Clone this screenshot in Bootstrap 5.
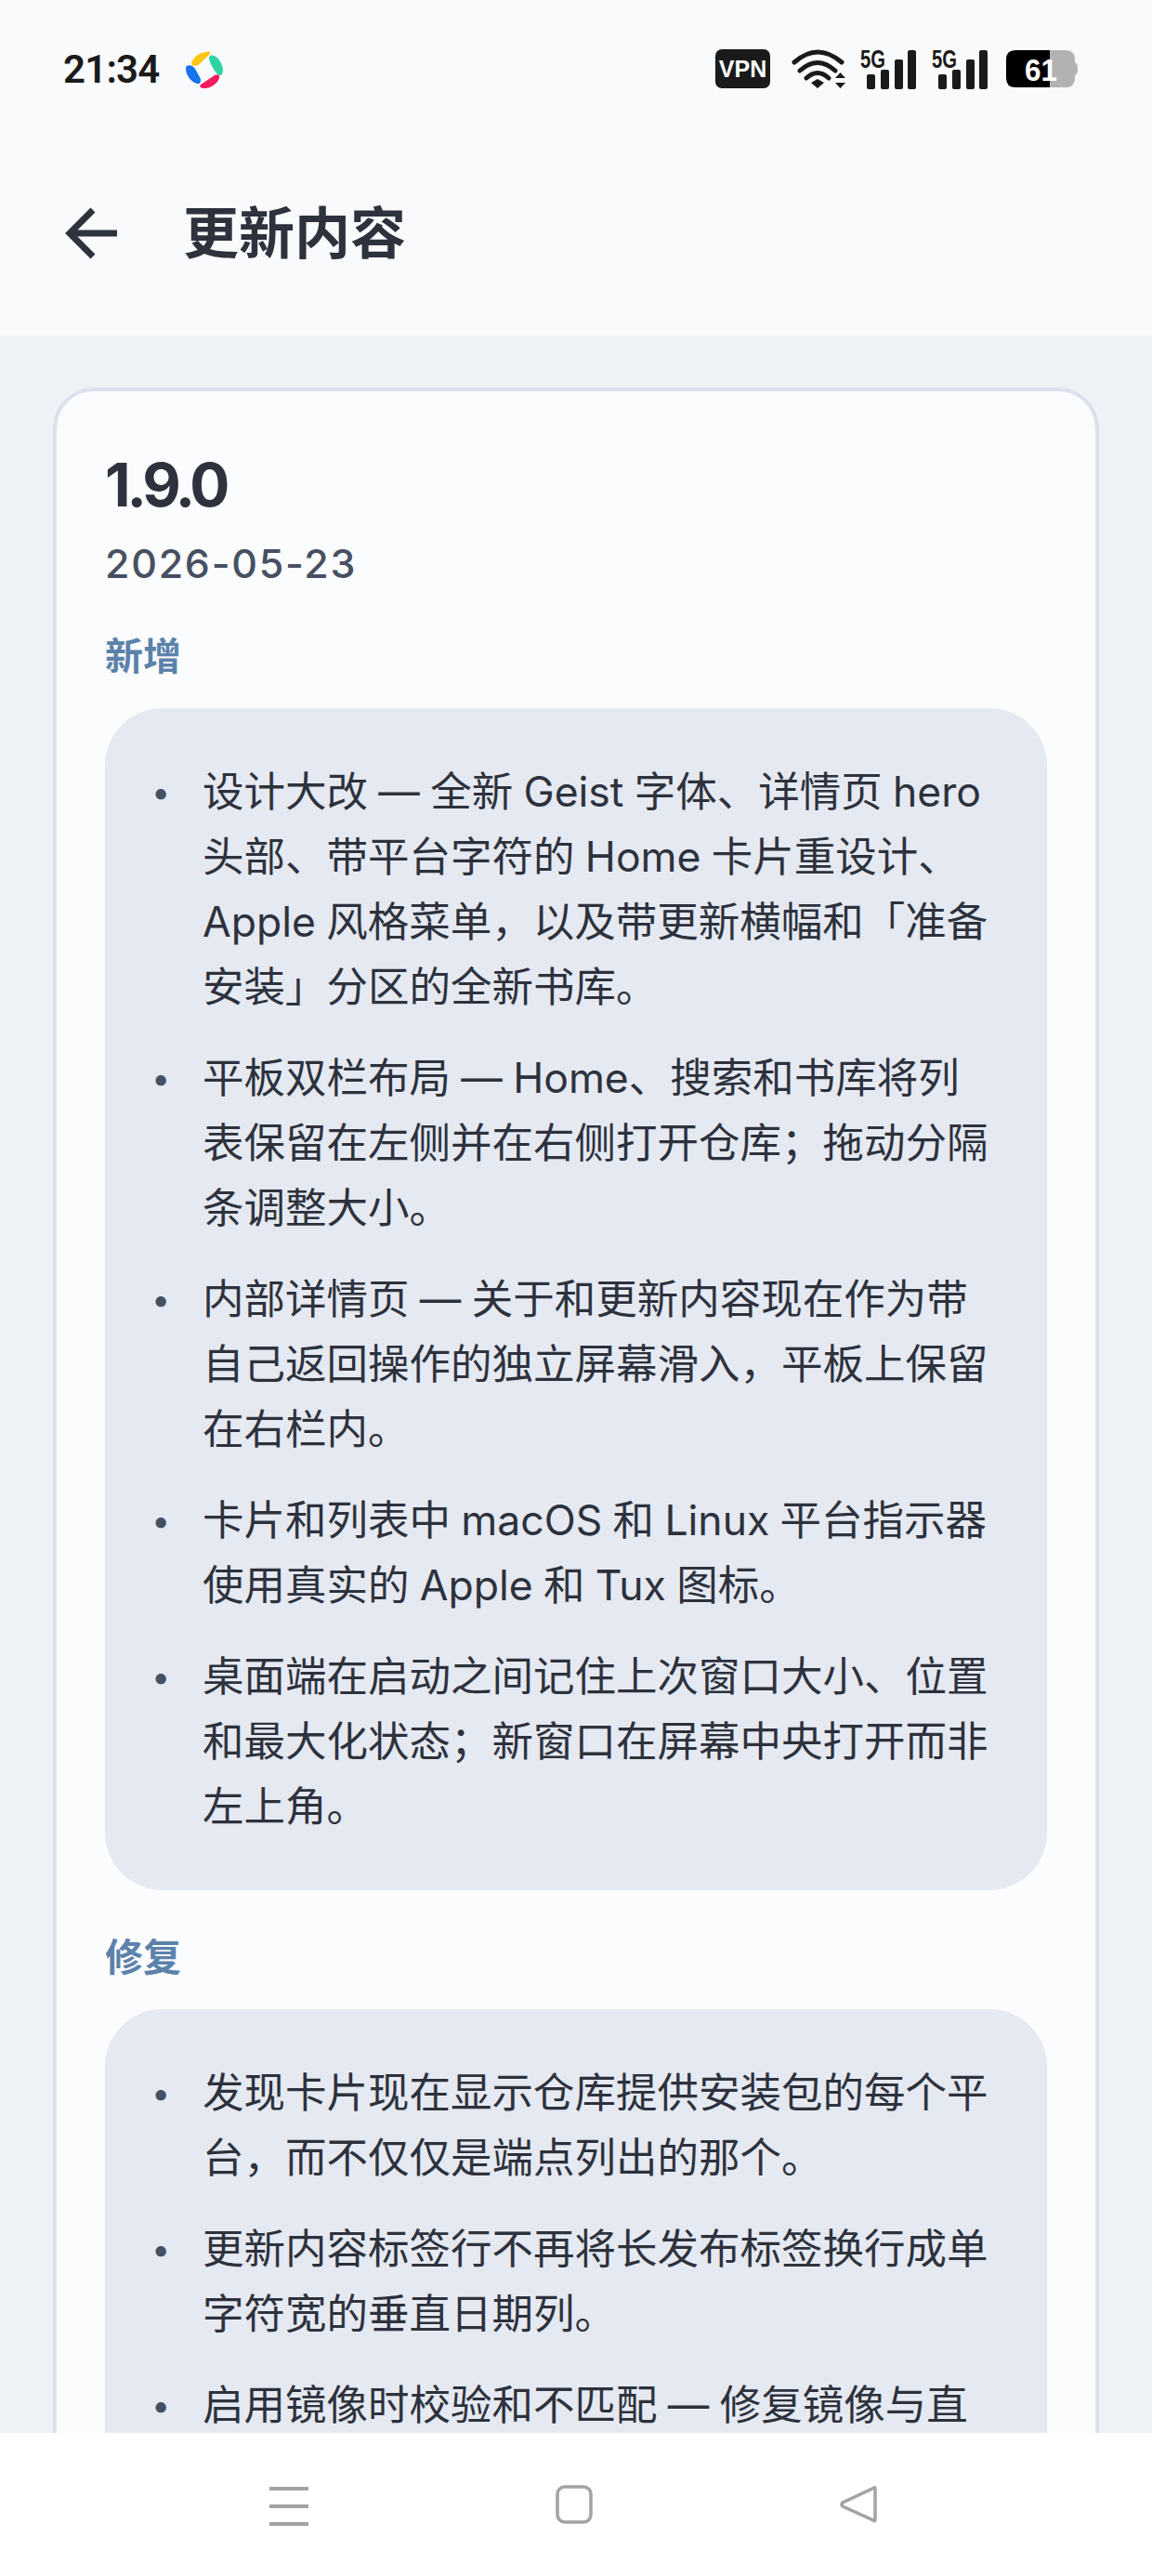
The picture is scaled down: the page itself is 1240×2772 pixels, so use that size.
<!DOCTYPE html>
<html lang="zh-CN">
<head>
  <meta charset="UTF-8" />
  <title>更新内容</title>
  <meta name="viewport" content="width=device-width, initial-scale=1" />
  <link href="https://cdn.jsdelivr.net/npm/bootstrap@5.3.0/dist/css/bootstrap.min.css" rel="stylesheet" />
  <style>
    html, body { height: 100%; }
    body { background-color: #eef1f5; color: #2d323d; font-family: Inter, "Noto Sans CJK SC", sans-serif; overflow: hidden; }
    .phone { height: 2772px; }
    .top-area { background-color: #f9fafb; height: 361px; flex: none; }
    .status-row { height: 148px; padding: 0 80px 0 68px; }
    .clock { font-family: Roboto, sans-serif; font-weight: 600; font-size: 42px; color: #1a1a1a; letter-spacing: -0.8px; margin-right: 29px; }
    .stat-vpn { margin-right: 23px; }
    .stat-wifi { margin-right: 16px; }
    .stat-sig { margin-right: 17px; margin-top: -5px; }
    .stat-sig2 { margin-right: 20px; margin-top: -5px; }
    .title-row { height: 205px; padding-left: 70px; gap: 71px; }
    .page-title { font-size: 60px; font-weight: 700; color: #2d323d; margin: 0; line-height: 1; }
    .content-area { min-height: 0; padding: 56px 57px 0; }
    .log-card { background-color: #fbfcfd; border: 4px solid #dbe0ec; border-radius: 44px; padding: 63px 52px 0; }
    .version { font-size: 64px; font-weight: 700; letter-spacing: -4px; line-height: 76px; margin: 0; }
    .rel-date { font-size: 43px; font-weight: 500; color: #475062; letter-spacing: 1.7px; line-height: 52px; margin-top: 20px; }
    .sec-title { font-size: 41px; font-weight: 700; color: #5c82ab; line-height: 56px; margin: 46px 0 28px; }
    .sec-title.next { margin-top: 44px; }
    .note-panel { background-color: #e5e9f1; border-radius: 62px; padding: 55px 56px 27px 50px; margin: 0; list-style: none; }
    .note-panel li { display: flex; font-size: 44.5px; line-height: 70px; word-spacing: -1.2px; margin: 0; padding: 0 0 28px; }
    .note-panel li::before { content: "•"; flex: none; width: 55px; color: #475062; font-size: 36px; }
    .nav-area { height: 154px; flex: none; background-color: #fff; }
    .nav-area svg { display: block; }
    .nav-inner { height: 154px; padding: 56px 296px 0 290px; }
  </style>
</head>
<body>
  <div class="phone d-flex flex-column">
    <div class="top-area">
      <div class="status-row d-flex align-items-center">
        <span class="clock">21:34</span>
        <svg width="40" height="41" viewBox="0 0 40 41">
          <path d="M6 14C8 7 15 2 25 1.5C27 2 26 4 25 5L14 15.5C11 18 6 17 6 14Z" fill="#fdc513"/>
          <path d="M27 5.5C33 5 39 12 40 21C40 25 38 28 36 27C32 25 26 15 25 9C25 7 26 5.5 27 5.5Z" fill="#2fd3a5"/>
          <path d="M1 17C4 15 8 17 10 20L15.5 30C17 34 15 37 12 36C5 34 0 26 0 20C0 18 0 17.5 1 17Z" fill="#1574ea"/>
          <path d="M16 37L31 27C34 25 37 27 36 30C34 36 27 41 20 41C16 41 14 39 16 37Z" fill="#f41b5c"/>
        </svg>
        <div class="ms-auto d-flex align-items-center">
          <svg class="stat-vpn" width="59" height="42" viewBox="0 0 59 42">
            <rect width="59" height="42" rx="7" fill="#1a1a1a"/>
            <text x="29.5" y="30" text-anchor="middle" font-family="Liberation Sans" font-weight="700" font-size="25" fill="#fff">VPN</text>
          </svg>
          <svg class="stat-wifi" width="58" height="42" viewBox="0 0 58 42">
            <path d="M3 14Q28 -8 54 14M9 23Q28 6 47 23M16 31Q28 20 40 31" fill="none" stroke="#1a1a1a" stroke-width="5" stroke-linecap="round"/>
            <path d="M21 36L28 32L35 36L28 42Z" fill="#1a1a1a"/>
            <path d="M47 31L52.5 25L58 31ZM47 36H58L52.5 42Z" fill="#1a1a1a"/>
          </svg>
          <svg class="stat-sig" width="60" height="48" viewBox="0 -5 60 48">
            <text x="0" y="20" font-family="Liberation Sans" font-weight="700" font-size="27" textLength="27" lengthAdjust="spacingAndGlyphs" fill="#1a1a1a">5G</text>
            <rect x="7" y="27" width="9" height="16" rx="2" fill="#1a1a1a"/>
            <rect x="22" y="22" width="9" height="21" rx="2" fill="#1a1a1a"/>
            <rect x="37" y="11" width="9" height="32" rx="2" fill="#1a1a1a"/>
            <rect x="51" y="1" width="9" height="42" rx="2" fill="#1a1a1a"/>
          </svg>
          <svg class="stat-sig2" width="60" height="48" viewBox="0 -5 60 48">
            <text x="0" y="20" font-family="Liberation Sans" font-weight="700" font-size="27" textLength="27" lengthAdjust="spacingAndGlyphs" fill="#1a1a1a">5G</text>
            <rect x="7" y="27" width="9" height="16" rx="2" fill="#1a1a1a"/>
            <rect x="22" y="22" width="9" height="21" rx="2" fill="#1a1a1a"/>
            <rect x="37" y="11" width="9" height="32" rx="2" fill="#1a1a1a"/>
            <rect x="51" y="1" width="9" height="42" rx="2" fill="#1a1a1a"/>
          </svg>
          <svg width="77" height="40" viewBox="0 0 77 40">
            <path d="M47 0H64Q74 0 74 10V30Q74 40 64 40H47Z" fill="#b2b2b2"/>
            <path d="M74 13Q77 14 77 20Q77 26 74 27Z" fill="#b2b2b2"/>
            <path d="M47 0H10Q0 0 0 10V30Q0 40 10 40H47Z" fill="#000"/>
            <text x="20" y="33" font-family="Liberation Sans" font-weight="700" font-size="34" textLength="35" lengthAdjust="spacingAndGlyphs" fill="#fff">61</text>
          </svg>
        </div>
      </div>
      <div class="title-row d-flex align-items-center">
        <svg width="56" height="56" viewBox="0 0 56 56">
          <path d="M30 3L5 28L30 53M5 28H56" fill="none" stroke="#2d323d" stroke-width="7"/>
        </svg>
        <h1 class="page-title">更新内容</h1>
      </div>
    </div>

    <div class="content-area flex-grow-1 overflow-hidden">
      <div class="log-card">
        <h2 class="version">1.9.0</h2>
        <div class="rel-date">2026-05-23</div>

        <div class="sec-title">新增</div>
        <ul class="note-panel">
          <li><span>设计大改 — 全新 Geist 字体、详情页 hero 头部、带平台字符的 Home 卡片重设计、Apple 风格菜单，以及带更新横幅和「准备安装」分区的全新书库。</span></li>
          <li><span>平板双栏布局 — Home、搜索和书库将列表保留在左侧并在右侧打开仓库；拖动分隔条调整大小。</span></li>
          <li><span>内部详情页 — 关于和更新内容现在作为带自己返回操作的独立屏幕滑入，平板上保留在右栏内。</span></li>
          <li><span>卡片和列表中 macOS 和 Linux 平台指示器使用真实的 Apple 和 Tux 图标。</span></li>
          <li><span>桌面端在启动之间记住上次窗口大小、位置和最大化状态；新窗口在屏幕中央打开而非左上角。</span></li>
        </ul>

        <div class="sec-title next">修复</div>
        <ul class="note-panel">
          <li><span>发现卡片现在显示仓库提供安装包的每个平台，而不仅仅是端点列出的那个。</span></li>
          <li><span>更新内容标签行不再将长发布标签换行成单字符宽的垂直日期列。</span></li>
          <li><span>启用镜像时校验和不匹配 — 修复镜像与直</span></li>
        </ul>
      </div>
    </div>

    <div class="nav-area">
      <div class="nav-inner d-flex justify-content-between">
        <svg width="42" height="44" viewBox="0 0 42 44">
          <path d="M0 4H42M0 23H42M0 42H42" stroke="#a3a3a3" stroke-width="4"/>
        </svg>
        <svg width="40" height="42" viewBox="0 0 40 42">
          <rect x="2" y="2" width="36" height="38" rx="8" fill="none" stroke="#a3a3a3" stroke-width="3.5"/>
        </svg>
        <svg width="40" height="42" viewBox="0 0 40 42">
          <path d="M37 3Q38 2 38 5V37Q38 40 36 38L3 23Q1 21 3 19Z" fill="none" stroke="#a3a3a3" stroke-width="3.5"/>
        </svg>
      </div>
    </div>
  </div>
  <script src="https://cdn.jsdelivr.net/npm/bootstrap@5.3.0/dist/js/bootstrap.bundle.min.js"></script>
</body>
</html>
